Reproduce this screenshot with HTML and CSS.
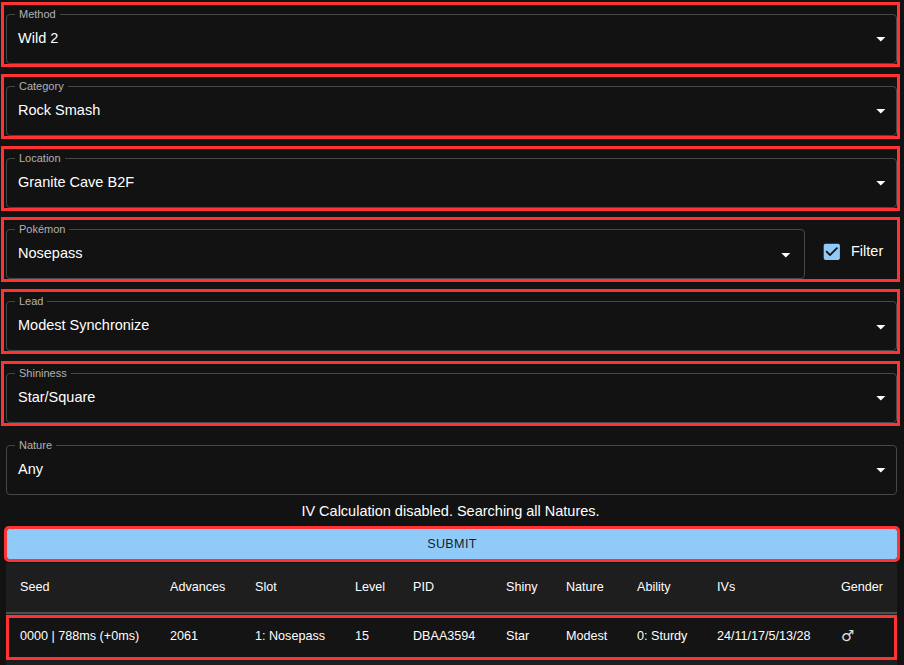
FILE: index.html
```html
<!DOCTYPE html>
<html lang="en">
<head>
<meta charset="utf-8">
<title>Wild 2</title>
<link rel="stylesheet" href="styles.css">
</head>
<body>
<div class="page">
  <div class="row hl">
    <div class="field"><span class="label">Method</span><span class="value">Wild 2</span><svg class="arrow" viewBox="0 0 24 24"><path d="M7 10l5 5 5-5z"/></svg></div>
  </div>
  <div class="row hl">
    <div class="field"><span class="label">Category</span><span class="value">Rock Smash</span><svg class="arrow" viewBox="0 0 24 24"><path d="M7 10l5 5 5-5z"/></svg></div>
  </div>
  <div class="row hl">
    <div class="field"><span class="label">Location</span><span class="value">Granite Cave B2F</span><svg class="arrow" viewBox="0 0 24 24"><path d="M7 10l5 5 5-5z"/></svg></div>
  </div>
  <div class="row hl row-check">
    <div class="field field-narrow"><span class="label">Pokémon</span><span class="value">Nosepass</span><svg class="arrow" viewBox="0 0 24 24"><path d="M7 10l5 5 5-5z"/></svg></div>
    <label class="check"><svg class="checkbox" viewBox="0 0 24 24"><path d="M19 3H5c-1.11 0-2 .9-2 2v14c0 1.1.89 2 2 2h14c1.11 0 2-.9 2-2V5c0-1.1-.89-2-2-2zm-9 14l-5-5 1.41-1.41L10 14.17l7.59-7.59L19 8l-9 9z"/></svg><span>Filter</span></label>
  </div>
  <div class="row hl">
    <div class="field"><span class="label">Lead</span><span class="value">Modest Synchronize</span><svg class="arrow" viewBox="0 0 24 24"><path d="M7 10l5 5 5-5z"/></svg></div>
  </div>
  <div class="row hl">
    <div class="field"><span class="label">Shininess</span><span class="value">Star/Square</span><svg class="arrow" viewBox="0 0 24 24"><path d="M7 10l5 5 5-5z"/></svg></div>
  </div>
  <div class="row last">
    <div class="field"><span class="label">Nature</span><span class="value">Any</span><svg class="arrow" viewBox="0 0 24 24"><path d="M7 10l5 5 5-5z"/></svg></div>
  </div>
  <p class="notice">IV Calculation disabled. Searching all Natures.</p>
  <button class="submit" type="button">SUBMIT</button>
  <div class="table">
    <div class="grid thead">
      <span>Seed</span><span>Advances</span><span>Slot</span><span>Level</span><span>PID</span><span>Shiny</span><span>Nature</span><span>Ability</span><span>IVs</span><span>Gender</span>
    </div>
    <div class="grid trow">
      <span>0000 | 788ms (+0ms)</span><span>2061</span><span>1: Nosepass</span><span>15</span><span>DBAA3594</span><span>Star</span><span>Modest</span><span>0: Sturdy</span><span>24/11/17/5/13/28</span><span class="gender">♂</span>
    </div>
  </div>
</div>
</body>
</html>
```
FILE: styles.css
```css
html, body {
  margin: 0;
  padding: 0;
  background: #121212;
  color: #fff;
  font-family: "Liberation Sans", Arial, sans-serif;
  overflow: hidden;
}

.page {
  padding: 5px 7px 0 4px;
}

.row {
  padding: 9px 0 0 2px;
  margin-bottom: 12.83px;
}

.row.last {
  margin-bottom: 0;
}

.hl {
  outline: 3px solid #ff3333;
}

.row-check {
  display: flex;
  align-items: flex-end;
}

.field {
  position: relative;
  box-sizing: border-box;
  height: 50px;
  border: 1px solid #474747;
  border-radius: 4px;
  display: flex;
  align-items: center;
  padding: 0 4px 0 11px;
}

.field-narrow {
  width: 799px;
  flex: none;
  padding-right: 7px;
}

.label {
  position: absolute;
  top: -7px;
  left: 8px;
  padding: 0 4px;
  background: #121212;
  color: #b3b3b3;
  font-size: 11px;
  line-height: 12px;
}

.value {
  flex: 1;
  font-size: 14.5px;
  line-height: 17px;
  padding-bottom: 1px;
}

.arrow {
  width: 21.6px;
  height: 21.6px;
  fill: #fff;
  flex: none;
}

.check {
  box-sizing: border-box;
  display: flex;
  align-items: center;
  height: 50px;
  padding-bottom: 6px;
  margin-left: 15.6px;
  font-size: 14.5px;
}

.checkbox {
  width: 21.6px;
  height: 21.6px;
  fill: #90caf9;
  margin-right: 8.8px;
}

.notice {
  margin: 8.5px 0 0;
  text-align: center;
  font-size: 14.5px;
  line-height: 17px;
}

.submit {
  display: block;
  box-sizing: border-box;
  margin: 8.5px 0 0 3px;
  width: calc(100% - 3px);
  height: 30px;
  border: none;
  border-radius: 2px;
  background: #90caf9;
  color: rgba(0, 0, 0, 0.87);
  font-family: "Liberation Sans", Arial, sans-serif;
  font-size: 12.6px;
  letter-spacing: 0.36px;
  outline: 3px solid #ff3333;
  padding: 0;
}

.table {
  margin: 4px 0 0 2px;
  background: #1e1e1e;
  padding-bottom: 12px;
}

.grid {
  display: grid;
  grid-template-columns: 150px 85px 100px 58px 93px 60px 71px 80px 124px 1fr;
  align-items: center;
  font-size: 12.6px;
  line-height: 15px;
}

.thead {
  height: 49px;
  padding-left: 14px;
  border-bottom: 2px solid #4f4f4f;
  font-weight: 500;
}

.trow {
  box-sizing: border-box;
  height: 45px;
  margin-top: 1px;
  padding: 0 0 2px 11px;
  border: 3px solid #ff3333;
  background: #141414;
}

.gender {
  font-family: "DejaVu Sans", sans-serif;
  font-size: 15px;
  color: #e0e0e0;
}
```
